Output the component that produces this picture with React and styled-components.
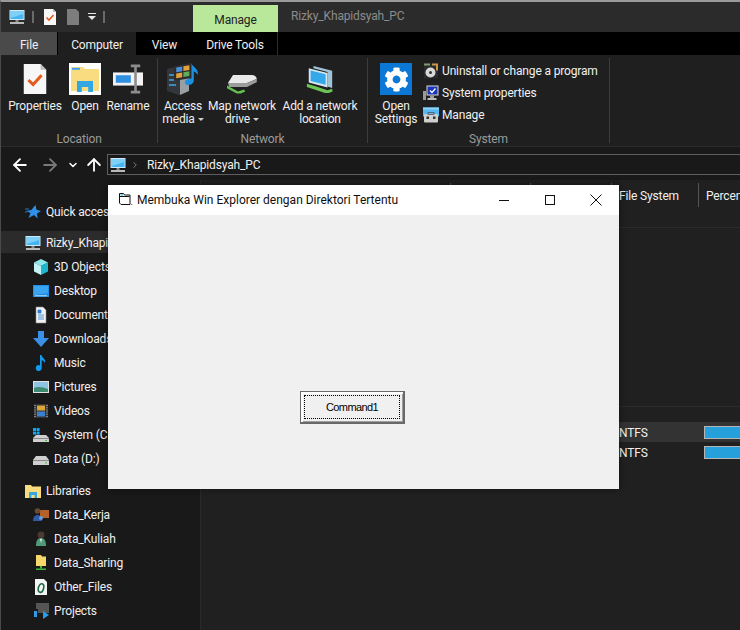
import React from "react"
import styled, { createGlobalStyle } from "styled-components"
import { FaCog } from "react-icons/fa"
import { ArrowLeft, ArrowRight, ArrowUp, ChevronDown, ChevronRight } from "lucide-react"

const GlobalStyle = createGlobalStyle`
  html, body {
    margin: 0;
    height: 100%;
    overflow: hidden;
    background: #1f1f1f;
  }
  * { box-sizing: border-box; }
`

/* Small hand drawn shell icons, all on a 16 unit canvas */
const shapes = {
  monitor: (
    <>
      <rect x="0.5" y="1" width="15" height="10" fill="#cfe9f8" />
      <rect x="1.5" y="2" width="13" height="8" fill="#45b4f0" />
      <path d="M1.5 2h13v3L1.5 9z" fill="#7fd0f7" />
      <rect x="6.5" y="11" width="3" height="2" fill="#8b8b8b" />
      <rect x="1" y="13" width="14" height="2" fill="#b9b9b9" />
    </>
  ),
  docCheck: (
    <>
      <path d="M2 0h9l3 3v13H2z" fill="#f7f7f7" />
      <path d="M11 0l3 3h-3z" fill="#bdbdbd" />
      <path d="M4.5 8.5l2.5 2.5 4.5-5" fill="none" stroke="#e8591c" strokeWidth="1.6" />
    </>
  ),
  docGray: <path d="M2 0h9l3 3v13H2z" fill="#7d7d7d" />,
  folderOpen: (
    <>
      <rect width="16" height="16" fill="#fff" />
      <path d="M1 2h6l1 1h7v11H1z" fill="#f9dc7f" />
      <rect x="1.5" y="2.4" width="4" height="1" fill="#41a5ee" />
      <path d="M4 9h8v5.5H9.6V12H6.4v2.5H4z" fill="#34a7e3" />
    </>
  ),
  folder: (
    <>
      <path d="M0 2h6l1 1.5h9V15H0z" fill="#f9dc7f" />
      <path d="M4 9h8v6H9.6v-3H6.4v3H4z" fill="#34a7e3" />
    </>
  ),
  rename: (
    <>
      <rect x="0" y="4.5" width="16" height="7" fill="#f2f2f2" />
      <rect x="1.5" y="6" width="8" height="4" fill="#2f8fe0" />
      <path d="M9.5 1h5M12 1v14M9.5 15h5" stroke="#8d8d8d" strokeWidth="1.4" fill="none" />
    </>
  ),
  media: (
    <>
      <path d="M0 3l6-1.5L11 4v10l-5 2-6-2z" fill="#33363b" />
      <path d="M6.5 7L11 5.5V14l-4.5 2z" fill="#9a9fa5" />
      <path d="M1 6h3.5M1 8.5h3.5M1 11h3.5" stroke="#3fa5e8" strokeWidth="0.7" />
      <path d="M3.5 1.5L12 0v7.5L3.5 9z" fill="#2c2c2c" />
      <path d="M4.6 2.2l3-.5v2.4l-3 .5z" fill="#4a90d8" />
      <path d="M8.2 1.6l3-.5v2.4l-3 .5z" fill="#e2a13a" />
      <path d="M4.6 5.2l3-.5v2.4l-3 .5z" fill="#e2a13a" />
      <path d="M8.2 4.6l3-.5v2.4l-3 .5z" fill="#5cae5c" />
      <path d="M12.2 0c.3 2 3.8 2.5 3.2 6-.5-1-1.3-1.6-2-1.8v4.5c0 1.5-1.6 2.3-2.9 2.3-1 0-1.5-.6-1.5-1.3 0-1.2 1.5-2.2 3.2-1.9z" fill="#1c8fe0" />
    </>
  ),
  drive: (
    <>
      <path d="M3.5 6h9.5c1.2 0 2.2.8 2.4 1.9L10.5 10H1z" fill="#e9e9e9" />
      <path d="M1 10h9.5l4.9-2.1v1.7L10.5 12H1.6z" fill="#9c9c9c" />
      <path d="M0.5 11.2L6 14.2l3-.9.6 1-2.2 1H5.4L.5 12.6z" fill="#63c24f" />
    </>
  ),
  network: (
    <>
      <path d="M4.5 1l10 2.6v9.2L12 12V4.2L4.5 2.3z" fill="#9fc4d8" />
      <path d="M2 2.2L12 4.8v7.7L2 9.8z" fill="#d4e6f0" />
      <path d="M3 3.4l8 2.1v5.6L3 9z" fill="#35a8ec" />
      <path d="M1 10.5l5 1.5 6 2 2.5-.8.2 1.4-2 .9h-2L1 12.2z" fill="#6bc453" />
    </>
  ),
  uninstall: (
    <>
      <rect x="1" y="0.5" width="14" height="15" fill="#2b2b2b" />
      <path d="M1 0.5h6v2H1z" fill="#7f9a6a" />
      <path d="M9 0.5h6v7h-2V2.5H9z" fill="#c8954a" />
      <circle cx="7.5" cy="9.5" r="5" fill="#d9d9d9" />
      <circle cx="7.5" cy="9.5" r="1.5" fill="#333" />
    </>
  ),
  sysProps: (
    <>
      <rect x="3.5" y="0.5" width="12" height="10" fill="#d9d9d9" />
      <rect x="4.5" y="1.5" width="10" height="8" fill="#1a35b8" />
      <path d="M7 5.5l2 2 3.5-4" fill="none" stroke="#fff" strokeWidth="1.3" />
      <rect x="0" y="6" width="3" height="9" fill="#9a9a9a" />
      <rect x="7" y="10.5" width="4" height="2.5" fill="#9d9d9d" />
      <rect x="4.5" y="13" width="9" height="2" fill="#bbb" />
    </>
  ),
  manage: (
    <>
      <path d="M0 0.5h16v9H0z" fill="#58b8f4" />
      <path d="M0 0.5h16v2H0z" fill="#8fd2f8" />
      <rect x="1" y="7" width="14" height="8.5" rx="1" fill="#cfcfcf" />
      <rect x="5" y="5.5" width="6" height="2" fill="none" stroke="#555" strokeWidth="0.8" />
      <rect x="3.5" y="9.5" width="2.5" height="2.5" fill="#333" />
      <rect x="10" y="9.5" width="2.5" height="2.5" fill="#333" />
    </>
  ),
  star: (
    <>
      <path d="M10.5 1l1 4.8L16 7l-4 2.4.6 5.1-3.6-3.4L3.5 14l2-5L1 7l5.3-1z" fill="#2f8fe8" />
      <path d="M0 5h4M0 8h2" stroke="#2f8fe8" strokeWidth="0.8" />
    </>
  ),
  cube: (
    <>
      <path d="M8 0l7 3.5L8 7 1 3.5z" fill="#8ce8ee" />
      <path d="M1 3.5L8 7v9l-7-3.5z" fill="#c4f3f5" />
      <path d="M15 3.5L8 7v9l7-3.5z" fill="#1fb5cf" />
    </>
  ),
  desktop: (
    <>
      <rect x="0" y="2" width="16" height="12" fill="#1d8fe6" />
      <path d="M1 3h14v7L1 12z" fill="#3aa4ef" />
      <rect x="2" y="12.4" width="12" height="0.8" fill="#d7eefc" />
    </>
  ),
  documents: (
    <>
      <path d="M3 0h7l3 3v13H3z" fill="#f1f1f1" stroke="#8a8a8a" strokeWidth="0.6" />
      <path d="M5 3h3v3H5zM5 8h6M5 10h6M5 12h6" fill="#2a7fd4" stroke="#2a7fd4" strokeWidth="0.8" />
    </>
  ),
  download: <path d="M5 0h6v7h5l-8 9-8-9h5z" fill="#3a8fe6" />,
  music: <path d="M7 0h1.5c.4 3 4.5 3.5 3.5 8-.8-1.8-2-2.6-3.3-2.8V13a3 3 0 1 1-1.7-2.6z" fill="#129bf0" />,
  pictures: (
    <>
      <rect x="0" y="2" width="16" height="12" fill="#e2e2e2" />
      <rect x="1" y="3" width="14" height="10" fill="#8fc3e2" />
      <path d="M1 9c4-2 9-1 14 1v3H1z" fill="#3f8a73" />
    </>
  ),
  videos: (
    <>
      <rect x="1" y="1" width="14" height="14" fill="#333" />
      <path d="M2 2v12M14 2v12" stroke="#bbb" strokeWidth="1.2" strokeDasharray="1 1.2" />
      <rect x="4" y="2.5" width="8" height="5" fill="#d8a83a" />
      <rect x="4" y="8.5" width="8" height="5" fill="#3a7fd0" />
    </>
  ),
  systemDrive: (
    <>
      <rect x="0" y="1" width="3" height="3" fill="#12a5f0" />
      <rect x="3.6" y="1" width="3" height="3" fill="#12a5f0" />
      <rect x="0" y="4.6" width="3" height="3" fill="#12a5f0" />
      <rect x="3.6" y="4.6" width="3" height="3" fill="#12a5f0" />
      <path d="M3 8h10l3 3v4H0v-4z" fill="#cfcfcf" />
      <rect x="0" y="11" width="16" height="1" fill="#8a8a8a" />
      <rect x="12" y="13" width="2" height="1" fill="#3bc44b" />
    </>
  ),
  dataDrive: (
    <>
      <path d="M3 5h10l3 4v5H0V9z" fill="#cfcfcf" />
      <rect x="0" y="9" width="16" height="1" fill="#8a8a8a" />
      <rect x="12" y="11.4" width="2" height="1" fill="#3bc44b" />
    </>
  ),
  dataKerja: (
    <>
      <rect x="7" y="3" width="9" height="8" fill="#b5622a" />
      <circle cx="4.5" cy="4" r="2.8" fill="#6b4a32" />
      <path d="M0 14c0-4 2-6 4.5-6S9 10 9 14z" fill="#3059a8" />
      <circle cx="8" cy="11" r="2" fill="#6d9bd8" />
    </>
  ),
  dataKuliah: (
    <>
      <circle cx="8" cy="4" r="3.4" fill="#4a3a30" />
      <path d="M3 15c0-6 2-8 5-8s5 2 5 8z" fill="#4f9a78" />
      <path d="M7 8h2l-1 4z" fill="#f0f0f0" />
    </>
  ),
  dataSharing: (
    <>
      <path d="M3 0h5l1 1.5h4V11H3z" fill="#f6d76b" />
      <rect x="7" y="11" width="2" height="2.5" fill="#3fb53f" />
      <rect x="3" y="13.5" width="10" height="1.5" fill="#3fb53f" />
    </>
  ),
  otherFiles: (
    <>
      <path d="M2 0h9l3 3v13H2z" fill="#f4f4f4" />
      <ellipse cx="8" cy="9" rx="2.6" ry="4.4" fill="none" stroke="#1d6b44" strokeWidth="1.6" transform="rotate(15 8 9)" />
    </>
  ),
  projects: (
    <>
      <rect x="3" y="0" width="13" height="10" fill="#555" />
      <rect x="0" y="6" width="5" height="9" fill="#1a1a1a" />
      <rect x="1" y="8" width="3" height="6" fill="#2e9be8" />
      <path d="M10 8l6 4-6 4z" fill="#2e9be8" />
    </>
  ),
  formIcon: (
    <>
      <path d="M1.5 1.5h4l1 1.5h5.5v9.5H3L1.5 11z" fill="#fff" stroke="#111" strokeWidth="1" />
      <path d="M2 4.5h9.5" stroke="#111" strokeWidth="1" />
      <path d="M2.5 2h2.5v2H2.5z" fill="#7fd6ea" />
      <path d="M13 12h1.5v1H13z" fill="#888" />
    </>
  ),
  minimize: <path d="M3 8.5h10" stroke="#111" strokeWidth="1" />,
  maximize: <rect x="3.5" y="3.5" width="9" height="9" fill="none" stroke="#111" strokeWidth="1" />,
  close: <path d="M2.5 2.5l11 11M13.5 2.5l-11 11" stroke="#111" strokeWidth="1" />,
}

const Svg = styled.svg`
  display: block;
  flex: none;
  overflow: visible;
  width: ${p => p.$size}px;
  height: ${p => p.$size}px;
`

const Icon = ({ name, size = 16 }) => (
  <Svg $size={size} viewBox="0 0 16 16">
    {shapes[name]}
  </Svg>
)

const Screen = styled.div`
  position: relative;
  width: 740px;
  height: 630px;
  overflow: hidden;
  display: flex;
  flex-direction: column;
  background: #1f1f1f;
  color: #f0f0f0;
  font-family: Roboto, "Liberation Sans", sans-serif;
  font-size: 12px;
  letter-spacing: -0.15px;
  border-top: 2px solid #9a9a9a;
  border-left: 1px solid #4a4a4a;
`

/* Title bar */
const TitleBar = styled.div`
  height: 30px;
  flex: none;
  display: flex;
  background: #2b2b2b;
`
const QuickTools = styled.div`
  width: 192px;
  flex: none;
  padding-left: 8px;
  display: flex;
  align-items: center;
  gap: 7px;
`
const ToolBar = styled.span`
  width: 2px;
  height: 12px;
  margin-right: ${p => p.$after || 0}px;
  background: #6a6a6a;
`
const DropMark = styled.span`
  width: 8px;
  height: 8px;
  border-top: 1px solid #e8e8e8;
  position: relative;
  &::after {
    content: "";
    position: absolute;
    left: 0;
    top: 2px;
    border: 4px solid transparent;
    border-top-color: #e8e8e8;
  }
`
const ManageTab = styled.div`
  width: 85px;
  margin-top: 3px;
  padding-top: 2px;
  display: flex;
  align-items: center;
  justify-content: center;
  background: #b9e89a;
  color: #222;
`
const WindowName = styled.div`
  padding: 0 0 2px 13px;
  display: flex;
  align-items: center;
  color: #8c8c8c;
`

/* Ribbon tabs */
const TabRow = styled.div`
  height: 23px;
  flex: none;
  display: flex;
  background: #000;
`
const Tab = styled.div`
  width: ${p => p.$w}px;
  padding-top: 2px;
  display: flex;
  align-items: center;
  justify-content: center;
  background: ${p => (p.$kind === "file" ? "#4a4a4a" : p.$kind === "on" ? "#1f1f1f" : "#000")};
  margin-right: ${p => (p.$kind === "file" ? 1 : 0)}px;
  border-right: ${p => (p.$kind === "tool" ? "1px solid #2c2c2c" : "0")};
`

/* Ribbon */
const Ribbon = styled.div`
  height: 92px;
  flex: none;
  display: flex;
  background: #1f1f1f;
  border-bottom: 1px solid #2b2b2b;
`
const Group = styled.div`
  width: ${p => p.$w}px;
  flex: none;
  margin: 3px 0;
  padding: 2px 0 0 ${p => p.$pad}px;
  display: flex;
  flex-direction: column;
  border-right: 1px solid #3d3d3d;
`
const GroupItems = styled.div`
  height: 72px;
  flex: none;
  display: flex;
`
const GroupName = styled.div`
  text-align: center;
  color: #9c9c9c;
  margin-left: -${p => p.$pad}px;
`
const Large = styled.div`
  width: ${p => p.$w}px;
  flex: none;
  display: flex;
  flex-direction: column;
  align-items: center;
  text-align: center;
  line-height: 13px;
  white-space: nowrap;
`
const LargeIcon = styled.div`
  width: 32px;
  height: 32px;
  margin: 3px 0 5px;
  display: flex;
  align-items: center;
  justify-content: center;
  background: ${p => p.$bg || "transparent"};
  color: #fff;
  font-size: 25px;
`
const Caret = styled.span`
  display: inline-block;
  margin-left: 3px;
  vertical-align: 2px;
  border: 3px solid transparent;
  border-bottom: 0;
  border-top-color: #cfcfcf;
`
const SmallList = styled.div`
  margin: 3px 0 0 6px;
  display: flex;
  flex-direction: column;
  gap: 6px;
`
const SmallItem = styled.div`
  height: 16px;
  display: flex;
  align-items: center;
  gap: 3px;
  white-space: nowrap;
`

/* Navigation */
const NavRow = styled.div`
  height: 33px;
  flex: none;
  display: flex;
  align-items: center;
  background: #191919;
  padding: 2px 0 0 9px;
`
const NavButton = styled.div`
  flex: none;
  width: 20px;
  margin-left: ${p => p.$ml || 0}px;
  display: flex;
  justify-content: center;
  color: ${p => (p.$dim ? "#7a7a7a" : "#fff")};
`
const AddressBox = styled.div`
  flex: 1;
  height: 21px;
  margin-left: 3px;
  display: flex;
  align-items: center;
  padding-left: 2px;
  border: 1px solid #5e5e5e;
  border-right: 0;
  background: #191919;
  color: #8a8a8a;
`
const AddressSep = styled.span`
  margin-left: 4px;
  display: flex;
`
const AddressText = styled.span`
  margin-left: 7px;
  color: #f0f0f0;
`

/* Main area */
const Main = styled.div`
  flex: 1;
  display: flex;
  min-height: 0;
`
const Sidebar = styled.div`
  width: 200px;
  flex: none;
  padding-top: 19px;
  background: #191919;
  border-right: 1px solid #2a2a2a;
`
const NavItem = styled.div`
  height: ${p => (p.$sel ? 22 : 24)}px;
  margin: ${p => (p.$sel ? "1px 0" : "0")};
  margin-bottom: ${p => (p.$gap ? 8 : p.$sel ? 1 : 0)}px;
  padding: 2px 0 0 ${p => (p.$level ? 32 : 24)}px;
  display: flex;
  align-items: center;
  gap: 5px;
  white-space: nowrap;
  background: ${p => (p.$sel ? "#2b2b2b" : "transparent")};
`
const Pane = styled.div`
  flex: 1;
  display: flex;
  flex-direction: column;
  background: #202020;
`
const HeaderRow = styled.div`
  height: 24px;
  margin-top: 3px;
  display: grid;
  grid-template-columns: 249px 80px 81px 87px 1fr;
`
const HeaderCell = styled.div`
  display: flex;
  align-items: center;
  padding: 2px 0 0 7px;
  white-space: nowrap;
  border-left: 1px solid #555;
`
const Rule = styled.div`
  height: 1px;
  margin-top: ${p => p.$top}px;
  background: #2b2b2b;
`
const DriveRow = styled.div`
  height: 20px;
  margin-top: ${p => p.$top || 0}px;
  display: grid;
  grid-template-columns: 249px 80px 81px 87px 1fr;
  align-items: center;
  background: ${p => (p.$hot ? "#333" : "transparent")};
`
const FsCell = styled.div`
  grid-column: 4;
  padding: 2px 0 0 8px;
`
const BarCell = styled.div`
  grid-column: 5;
  height: 13px;
  margin-left: 6px;
  background: #26a0da;
  border: 1px solid #b5b5b5;
  border-width: 1px 0 1px 1px;
`

/* Floating VB form */
const Form = styled.div`
  position: absolute;
  left: 107px;
  top: 183px;
  width: 511px;
  height: 304px;
  display: flex;
  flex-direction: column;
  background: #f0f0f0;
  box-shadow: 0 0 7px rgba(0, 0, 0, 0.45);
  letter-spacing: 0;
`
const FormTitle = styled.div`
  height: 30px;
  flex: none;
  padding-left: 10px;
  display: flex;
  align-items: center;
  background: #fff;
  color: #101010;
`
const FormName = styled.span`
  flex: 1;
  margin-left: 3px;
`
const Control = styled.div`
  width: 46px;
  height: 30px;
  display: flex;
  align-items: center;
  justify-content: center;
`
const FormBody = styled.div`
  flex: 1;
  padding: 176px 0 0 192px;
`
const Command = styled.button`
  width: 105px;
  height: 33px;
  padding: 3px;
  display: block;
  background: #f0f0f0;
  border: 1px solid #696969;
  border-right-width: 2px;
  border-bottom-width: 2px;
  box-shadow: inset 1px 1px 0 #fff, inset 2px 2px 0 #fff, inset -1px -1px 0 #a0a0a0;
  font-family: "Liberation Sans", Arial, sans-serif;
  font-size: 11px;
  letter-spacing: -0.6px;
  color: #000;
`
const CommandFocus = styled.span`
  height: 100%;
  display: flex;
  align-items: center;
  justify-content: center;
  border: 1px dotted #000;
`

const App = () => (
  <Screen>
    <GlobalStyle />
    <TitleBar>
      <QuickTools>
        <Icon name="monitor" />
        <ToolBar $after={1} />
        <Icon name="docCheck" />
        <Icon name="docGray" />
        <DropMark />
        <ToolBar />
      </QuickTools>
      <ManageTab>Manage</ManageTab>
      <WindowName>Rizky_Khapidsyah_PC</WindowName>
    </TitleBar>

    <TabRow>
      <Tab $w={56} $kind="file">File</Tab>
      <Tab $w={78} $kind="on">Computer</Tab>
      <Tab $w={57}>View</Tab>
      <Tab $w={85} $kind="tool">Drive Tools</Tab>
    </TabRow>

    <Ribbon>
      <Group $w={157} $pad={7}>
        <GroupItems>
          <Large $w={54}><LargeIcon><Icon name="docCheck" size={30} /></LargeIcon>Properties</Large>
          <Large $w={46}><LargeIcon><Icon name="folderOpen" size={32} /></LargeIcon>Open</Large>
          <Large $w={40}><LargeIcon><Icon name="rename" size={30} /></LargeIcon>Rename</Large>
        </GroupItems>
        <GroupName $pad={7}>Location</GroupName>
      </Group>
      <Group $w={210} $pad={4}>
        <GroupItems>
          <Large $w={42}><LargeIcon><Icon name="media" size={32} /></LargeIcon>Access<span>media<Caret /></span></Large>
          <Large $w={76}><LargeIcon><Icon name="drive" size={32} /></LargeIcon>Map network<span>drive<Caret /></span></Large>
          <Large $w={80}><LargeIcon><Icon name="network" size={30} /></LargeIcon>Add a network<span>location</span></Large>
        </GroupItems>
        <GroupName $pad={4}>Network</GroupName>
      </Group>
      <Group $w={242} $pad={7}>
        <GroupItems>
          <Large $w={42}><LargeIcon $bg="#0a78d4"><FaCog /></LargeIcon>Open<span>Settings</span></Large>
          <SmallList>
            <SmallItem><Icon name="uninstall" />Uninstall or change a program</SmallItem>
            <SmallItem><Icon name="sysProps" />System properties</SmallItem>
            <SmallItem><Icon name="manage" />Manage</SmallItem>
          </SmallList>
        </GroupItems>
        <GroupName $pad={7}>System</GroupName>
      </Group>
    </Ribbon>

    <NavRow>
      <NavButton><ArrowLeft size={20} strokeWidth={2.2} /></NavButton>
      <NavButton $ml={10} $dim><ArrowRight size={20} strokeWidth={2.2} /></NavButton>
      <NavButton $ml={3}><ChevronDown size={12} strokeWidth={3} /></NavButton>
      <NavButton $ml={1}><ArrowUp size={20} strokeWidth={2.2} /></NavButton>
      <AddressBox>
        <Icon name="monitor" />
        <AddressSep><ChevronRight size={10} strokeWidth={2} /></AddressSep>
        <AddressText>Rizky_Khapidsyah_PC</AddressText>
      </AddressBox>
    </NavRow>

    <Main>
      <Sidebar>
        <NavItem $gap><Icon name="star" />Quick access</NavItem>
        <NavItem $sel><Icon name="monitor" />Rizky_Khapidsyah_PC</NavItem>
        <NavItem $level><Icon name="cube" />3D Objects</NavItem>
        <NavItem $level><Icon name="desktop" />Desktop</NavItem>
        <NavItem $level><Icon name="documents" />Documents</NavItem>
        <NavItem $level><Icon name="download" />Downloads</NavItem>
        <NavItem $level><Icon name="music" />Music</NavItem>
        <NavItem $level><Icon name="pictures" />Pictures</NavItem>
        <NavItem $level><Icon name="videos" />Videos</NavItem>
        <NavItem $level><Icon name="systemDrive" />System (C:)</NavItem>
        <NavItem $level $gap><Icon name="dataDrive" />Data (D:)</NavItem>
        <NavItem><Icon name="folder" />Libraries</NavItem>
        <NavItem $level><Icon name="dataKerja" />Data_Kerja</NavItem>
        <NavItem $level><Icon name="dataKuliah" />Data_Kuliah</NavItem>
        <NavItem $level><Icon name="dataSharing" />Data_Sharing</NavItem>
        <NavItem $level><Icon name="otherFiles" />Other_Files</NavItem>
        <NavItem $level><Icon name="projects" />Projects</NavItem>
      </Sidebar>
      <Pane>
        <HeaderRow>
          <span />
          <HeaderCell />
          <HeaderCell />
          <HeaderCell>File System</HeaderCell>
          <HeaderCell>Percent Full</HeaderCell>
        </HeaderRow>
        <Rule $top={20} />
        <Rule $top={178} />
        <DriveRow $top={15} $hot>
          <FsCell>NTFS</FsCell>
          <BarCell />
        </DriveRow>
        <DriveRow>
          <FsCell>NTFS</FsCell>
          <BarCell />
        </DriveRow>
      </Pane>
    </Main>

    <Form>
      <FormTitle>
        <Icon name="formIcon" />
        <FormName>Membuka Win Explorer dengan Direktori Tertentu</FormName>
        <Control><Icon name="minimize" /></Control>
        <Control><Icon name="maximize" /></Control>
        <Control><Icon name="close" /></Control>
      </FormTitle>
      <FormBody>
        <Command>
          <CommandFocus>Command1</CommandFocus>
        </Command>
      </FormBody>
    </Form>
  </Screen>
)

export default App
